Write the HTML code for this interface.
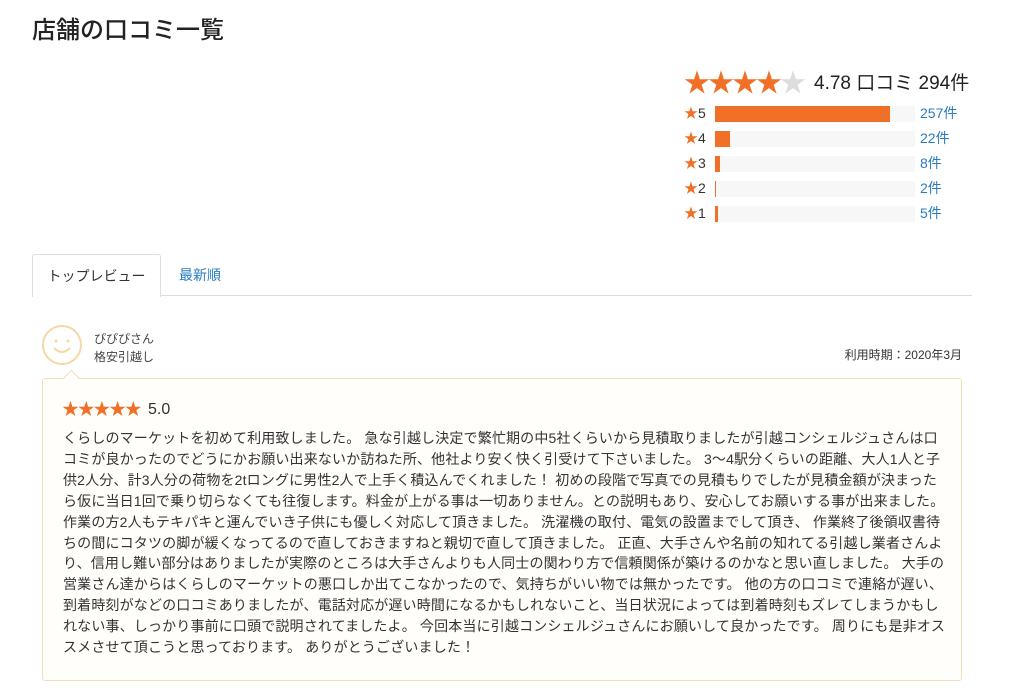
<!DOCTYPE html>
<html><head><meta charset="utf-8"><style>
body{margin:0;background:#fff;font-family:"Liberation Sans","Noto Sans CJK JP",sans-serif;color:#333;width:1014px;height:695px;overflow:hidden;position:relative}
.a{position:absolute;white-space:nowrap}
h1{position:absolute;left:32px;top:10px;margin:0;font-size:24px;font-weight:500;color:#222}
.st{color:#f07027}
.row{position:absolute;left:684px;width:300px;height:25px;font-size:14px;line-height:25px;white-space:nowrap}
.row .l{position:absolute;left:0;width:28px}
.row .bg{position:absolute;left:31px;top:5px;width:200px;height:16px;background:#f7f7f7}
.row .f{position:absolute;left:0;top:0;height:16px;background:#ef7026}
.row .c{position:absolute;left:236px;color:#2a7cc0;white-space:nowrap}
.txt{position:absolute;left:63px;top:428px;font-size:14px;line-height:20.9px;color:#333;white-space:nowrap;letter-spacing:0.16px}
</style></head><body>
<h1>店舗の口コミ一覧</h1>
<div class="a" style="left:684px;top:68px;font-size:26px;line-height:30px;letter-spacing:-2px"><span class="st">★★★★</span><span style="color:#ddd">★</span></div>
<div class="a" style="left:814px;top:70px;font-size:19px;line-height:28px;color:#222">4.78 口コミ 294件</div>
<div class="row" style="top:101px"><span class="l"><span class="st">★</span>5</span><div class="bg"><div class="f" style="width:175px"></div></div><span class="c">257件</span></div>
<div class="row" style="top:126px"><span class="l"><span class="st">★</span>4</span><div class="bg"><div class="f" style="width:15px"></div></div><span class="c">22件</span></div>
<div class="row" style="top:151px"><span class="l"><span class="st">★</span>3</span><div class="bg"><div class="f" style="width:5px"></div></div><span class="c">8件</span></div>
<div class="row" style="top:176px"><span class="l"><span class="st">★</span>2</span><div class="bg"><div class="f" style="width:1px"></div></div><span class="c">2件</span></div>
<div class="row" style="top:201px"><span class="l"><span class="st">★</span>1</span><div class="bg"><div class="f" style="width:3px"></div></div><span class="c">5件</span></div>

<div class="a" style="left:32px;top:254px;width:127px;height:42px;border:1px solid #ddd;border-bottom:none;border-radius:3px 3px 0 0;background:#fff;font-size:14px;line-height:42px;text-align:center;color:#333;z-index:2">トップレビュー</div>
<div class="a" style="left:179px;top:254px;font-size:14px;line-height:42px;color:#2a7cc0">最新順</div>
<div class="a" style="left:32px;top:295px;width:940px;border-top:1px solid #ddd"></div>

<svg class="a" style="left:41px;top:324px" width="42" height="42"><circle cx="21" cy="21" r="19" fill="none" stroke="#f4d9a6" stroke-width="2"/><circle cx="15" cy="17" r="1.5" fill="#f4d9a6"/><circle cx="27" cy="17" r="1.5" fill="#f4d9a6"/><path d="M13 24 Q21 32 29 24" fill="none" stroke="#f4d9a6" stroke-width="2"/></svg>
<div class="a" style="left:94px;top:330px;font-size:12px;line-height:18px;color:#444">ぴぴぴさん<br>格安引越し</div>
<div class="a" style="right:52px;top:346px;font-size:12px;line-height:18px;color:#333">利用時期：2020年3月</div>

<div class="a" style="left:42px;top:378px;width:918px;height:301px;border:1px solid #f3dfb5;border-radius:3px;background:#fffefb"></div>
<div class="a" style="left:66px;top:372px;width:10px;height:10px;border-left:1px solid #f3dfb5;border-top:1px solid #f3dfb5;background:#fffefb;transform:rotate(45deg)"></div>
<div class="a" style="left:62px;top:399px;font-size:17px;line-height:22px;letter-spacing:-1.3px"><span class="st">★★★★★</span></div>
<div class="a" style="left:148px;top:400px;font-size:16px;line-height:20px;color:#333">5.0</div>
<div class="txt">くらしのマーケットを初めて利用致しました。 急な引越し決定で繁忙期の中5社くらいから見積取りましたが引越コンシェルジュさんは口<br>コミが良かったのでどうにかお願い出来ないか訪ねた所、他社より安く快く引受けて下さいました。 3〜4駅分くらいの距離、大人1人と子<br>供2人分、計3人分の荷物を2tロングに男性2人で上手く積込んでくれました！ 初めの段階で写真での見積もりでしたが見積金額が決まった<br>ら仮に当日1回で乗り切らなくても往復します。料金が上がる事は一切ありません。との説明もあり、安心してお願いする事が出来ました。<br>作業の方2人もテキパキと運んでいき子供にも優しく対応して頂きました。 洗濯機の取付、電気の設置までして頂き、 作業終了後領収書待<br>ちの間にコタツの脚が緩くなってるので直しておきますねと親切で直して頂きました。 正直、大手さんや名前の知れてる引越し業者さんよ<br>り、信用し難い部分はありましたが実際のところは大手さんよりも人同士の関わり方で信頼関係が築けるのかなと思い直しました。 大手の<br>営業さん達からはくらしのマーケットの悪口しか出てこなかったので、気持ちがいい物では無かったです。 他の方の口コミで連絡が遅い、<br>到着時刻がなどの口コミありましたが、電話対応が遅い時間になるかもしれないこと、当日状況によっては到着時刻もズレてしまうかもし<br>れない事、しっかり事前に口頭で説明されてましたよ。 今回本当に引越コンシェルジュさんにお願いして良かったです。 周りにも是非オス<br>スメさせて頂こうと思っております。 ありがとうございました！</div>
</body></html>
